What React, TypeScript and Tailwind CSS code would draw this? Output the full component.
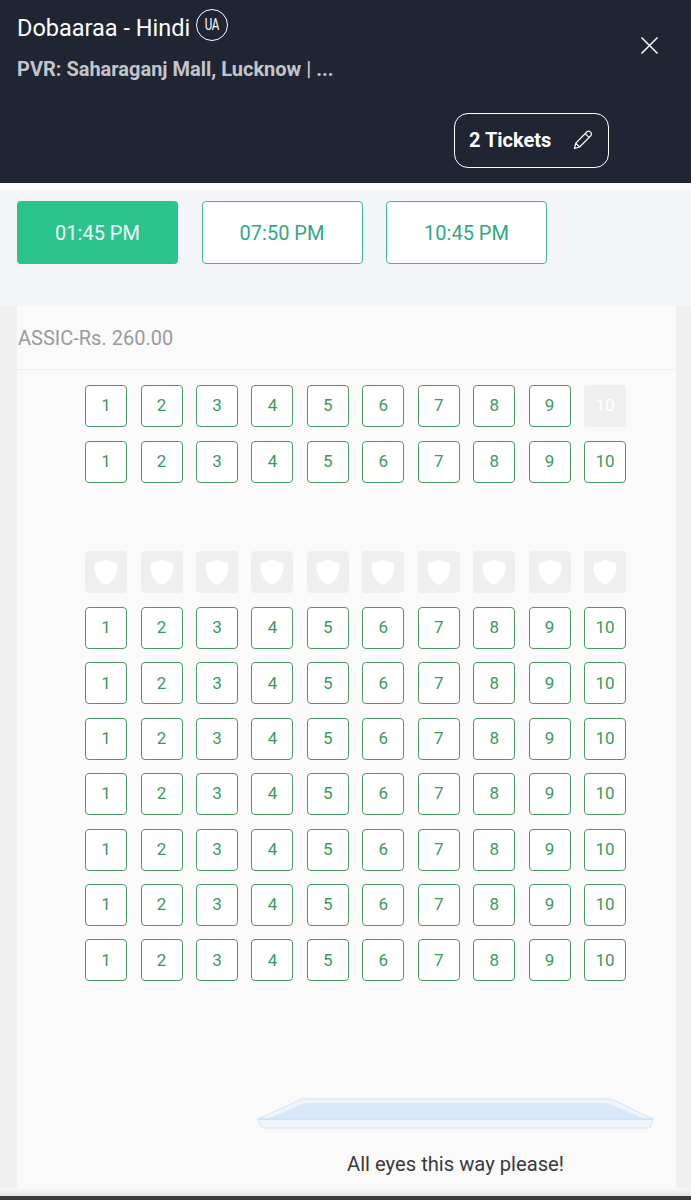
import React from "react";

const nums = [1, 2, 3, 4, 5, 6, 7, 8, 9, 10];

function Seat({ n }: { n: number }) {
  return (
    <div className="w-[42px] h-[42px] shrink-0 rounded-[4px] border-[1.25px] border-[#4a9a68] bg-white flex items-center justify-center text-[17px] text-[#3b9a5d]">
      {n}
    </div>
  );
}

function Row({ children }: { children: React.ReactNode }) {
  return <div className="flex gap-[13.45px] h-[42px]">{children}</div>;
}

function SeatRow() {
  return (
    <Row>
      {nums.map((n) => (
        <Seat key={n} n={n} />
      ))}
    </Row>
  );
}

function Shield() {
  return (
    <svg width="24" height="26" viewBox="0 0 24 26">
      <path d="M12 0 C15 2.2 19.5 3.6 23 3.8 C23.4 9 23.4 13 22 16 C20 20.5 16.5 23.8 12 26 C7.5 23.8 4 20.5 2 16 C0.6 13 0.6 9 1 3.8 C4.5 3.6 9 2.2 12 0 Z" fill="#ffffff" />
    </svg>
  );
}

function Time({ label, active }: { label: string; active?: boolean }) {
  return (
    <div
      className={
        active
          ? "w-[161px] h-[63px] rounded-[4px] bg-[#2cc48d] text-[#f2fbf7] flex items-center justify-center text-[20px]"
          : "w-[161px] h-[63px] rounded-[4px] bg-white border border-[#3fb58e] text-[#2fa883] flex items-center justify-center text-[20px]"
      }
    >
      {label}
    </div>
  );
}

export default function App() {
  return (
    <div className="w-[691px] h-[1200px] overflow-hidden flex flex-col bg-[#f0f0f0] font-['Roboto',sans-serif]">
      <header className="relative h-[183px] shrink-0 bg-[#1f2533] text-white pl-[17px] pt-[9px]">
        <div className="flex items-start h-[34px] gap-[6px]">
          <span className="text-[23.5px] leading-[28px] mt-[5px]">Dobaaraa - Hindi</span>
          <span className="w-[32px] h-[32px] rounded-full border-[1.5px] border-white flex items-center justify-center text-[16px] tracking-[-0.5px]">
            <span className="[transform:scale(0.72,1.08)]">UA</span>
          </span>
        </div>
        <div className="mt-[14px] text-[20px] leading-[24px] font-bold text-[#c3c5ca]">PVR: Saharaganj Mall, Lucknow | ...</div>
        <svg className="absolute left-[640px] top-[36px]" width="19" height="19" viewBox="0 0 19 19" fill="none" stroke="#ffffff" strokeWidth="1.5">
          <path d="M1.5 1.5 L17.5 17.5 M17.5 1.5 L1.5 17.5" />
        </svg>
        <div className="absolute left-[454px] top-[113px] w-[155px] h-[55px] rounded-[14px] border border-white flex items-center pl-[14px] pb-[2px]">
          <span className="text-[20px] font-bold">2 Tickets</span>
          <svg className="ml-[22px]" width="20" height="20" viewBox="0 0 20 20" fill="none" stroke="#ffffff" strokeWidth="1.2" strokeLinejoin="round">
            <path d="M1.5 18.5 L2.8 13.2 L13.8 2 C14.8 1 16.5 1 17.6 2.1 C18.7 3.2 18.7 4.8 17.7 5.8 L6.6 17 Z M2.8 13.2 L6.6 17 M12.2 3.6 L16.1 7.4" />
          </svg>
        </div>
      </header>

      <div className="h-[123px] shrink-0 bg-[#f4f5f9] border-t-[7px] border-[#f9f9fc] pl-[17px] pt-[11px] flex gap-[23.5px]">
        <Time label="01:45 PM" active />
        <Time label="07:50 PM" />
        <Time label="10:45 PM" />
      </div>

      <main className="flex-1 ml-[17px] w-[659px] bg-[#fafafa] relative">
        <div className="h-[64px] border-b border-[#efefef] flex items-center text-[20px] text-[#9a9a9a] pt-[1px] pl-[1px]">ASSIC-Rs. 260.00</div>
        <div className="pl-[68.1px] pt-[15.1px] flex flex-col gap-[13.45px]">
          <Row>
            {nums.slice(0, 9).map((n) => (
              <Seat key={n} n={n} />
            ))}
            <div className="w-[42px] h-[42px] shrink-0 rounded-[4px] bg-[#efefef] flex items-center justify-center text-[17px] text-white">10</div>
          </Row>
          <SeatRow />
          <Row>{null}</Row>
          <Row>
            {nums.map((n) => (
              <div key={n} className="w-[42px] h-[42px] shrink-0 rounded-[4px] bg-[#efefef] flex items-center justify-center">
                <Shield />
              </div>
            ))}
          </Row>
          {[0, 1, 2, 3, 4, 5, 6].map((r) => (
            <SeatRow key={r} />
          ))}
        </div>
        <div className="absolute left-[240px] top-[792px]">
          <svg width="398" height="32" viewBox="0 0 398 32">
            <path d="M1 21 L45 1 L354 1 L396 21 L393 30 L5 30 Z" fill="#eef5fd" stroke="#d6e3f3" />
            <path d="M12 20 L48 5 L350 5 L386 20 Z" fill="#d8e7fa" />
            <path d="M1 21 L396 21" stroke="#c9dcf3" strokeWidth="1.5" />
          </svg>
        </div>
        <div className="absolute left-[330px] top-[845px] text-[20.2px] leading-[26px] text-[#3a3a3a] whitespace-nowrap">All eyes this way please!</div>
      </main>
      <div className="h-[8px] shrink-0 bg-gradient-to-b from-[#fafafa] to-[#e4e4e4]" />
      <div className="h-[4px] shrink-0 bg-[#3a3a3a]" />
    </div>
  );
}
